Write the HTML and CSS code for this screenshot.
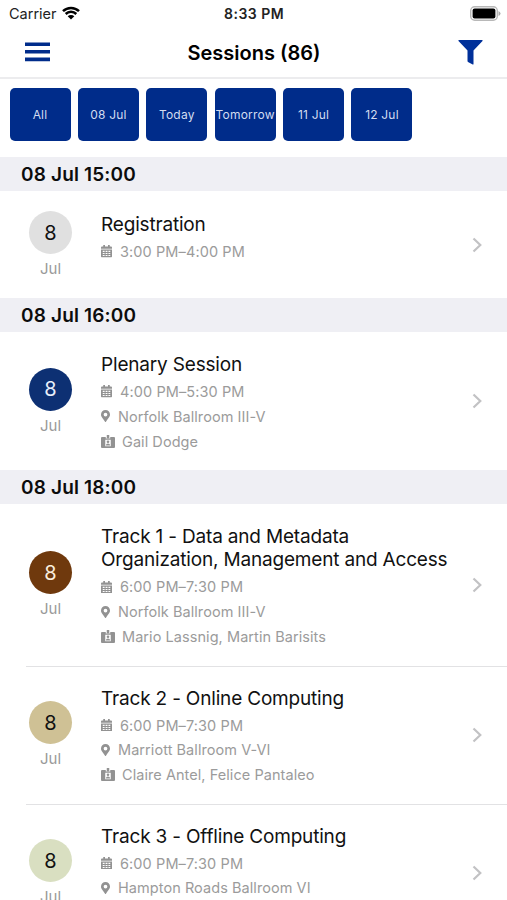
FILE: index.html
```html
<!DOCTYPE html>
<html lang="en">
<head>
<meta charset="utf-8">
<title>Sessions</title>
<link rel="stylesheet" href="styles.css">
</head>
<body>
<svg class="defs" aria-hidden="true">
  <symbol id="cal" viewBox="0 0 22 25"><path fill-rule="evenodd" d="M0 9h22v14a2 2 0 0 1-2 2H2a2 2 0 0 1-2-2zM3.500 11.500v2.300h3.700v-2.300zM9.200 11.500v2.300h3.700v-2.300zM14.900 11.500v2.300h3.700v-2.300zM3.500 15.800v2.300h3.700v-2.300zM9.200 15.800v2.300h3.700v-2.300zM14.900 15.800v2.300h3.700v-2.300zM3.500 20.100v2.100h3.700v-2.100zM9.200 20.100v2.100h3.700v-2.100zM14.900 20.100v2.100h3.700v-2.100z"/><path d="M2 3h2.500V0H8v3h6V0h3.500v3H20a2 2 0 0 1 2 2v2.500H0V5a2 2 0 0 1 2-2z"/></symbol>
  <symbol id="pin" viewBox="0 0 384 512"><path fill-rule="evenodd" d="M172.300 501.700C27 291 0 269.400 0 192 0 86 86 0 192 0s192 86 192 192c0 77.400-27 99-172.300 309.700a24 24 0 0 1-39.400 0zM192 272a80 80 0 1 0 0-160 80 80 0 0 0 0 160z"/></symbol>
  <symbol id="badge" viewBox="0 0 28 26"><path fill-rule="evenodd" d="M2 4h7.500v3h9V4H26a2 2 0 0 1 2 2v18a2 2 0 0 1-2 2H2a2 2 0 0 1-2-2V6a2 2 0 0 1 2-2zM8.500 9.500v13h11v-13z"/><path d="M11.500 0h5v7h-5z"/><circle cx="14" cy="13.500" r="2.600"/><path d="M9.800 21a4.200 4 0 0 1 8.400 0z"/></symbol>
  <symbol id="chev" viewBox="0 0 10 16"><path d="M1.500 1.500 8.300 8 1.500 14.500" fill="none" stroke="#c2c2c4" stroke-width="2.200"/></symbol>
</svg>
<div class="status">
  <span class="carrier">Carrier</span>
  <svg class="wifi" viewBox="0 0 18 14"><path d="M1 5.200a11.300 11.300 0 0 1 16 0M3.700 8a7.500 7.500 0 0 1 10.600 0" fill="none" stroke="#000" stroke-width="2.500"/><path d="M5.700 10.300a4.700 4.700 0 0 1 6.600 0L9 13.600z"/></svg>
  <span class="clock">8:33 PM</span>
  <svg class="battery" viewBox="0 0 31 15"><rect x=".7" y=".7" width="26.600" height="13.600" rx="4" fill="#fff" stroke="#b8b8b8" stroke-width="1.400"/><rect x="2.600" y="2.600" width="22.800" height="9.800" rx="2"/><path d="M28.500 5v5q2-1 2-2.500t-2-2.500z" fill="#aaa"/></svg>
</div>
<header class="nav">
  <svg class="menu" viewBox="0 0 25 20"><path d="M0 2.200h25M0 9.800h25M0 17.400h25" stroke="#002c8b" stroke-width="3.600"/></svg>
  <h1>Sessions (86)</h1>
  <svg class="filter" viewBox="0 0 25 25"><path d="M1 0h23q1 0 .5 1L15.500 10.500V24q0 .8-.8.500L10 22q-.5-.4-.5-1V10.500L.5 1Q0 0 1 0z" fill="#00309a"/></svg>
</header>
<nav class="chips">
  <span>All</span><span>08 Jul</span><span>Today</span><span>Tomorrow</span><span>11 Jul</span><span>12 Jul</span>
</nav>
<main>
  <h2>08 Jul 15:00</h2>
  <article class="row short">
    <div class="date"><b class="grey">8</b><i>Jul</i></div>
    <div class="info"><h3>Registration</h3>
      <p><svg class="cal"><use href="#cal"/></svg><span class="time">3:00 PM–4:00 PM</span></p></div>
    <svg class="chev"><use href="#chev"/></svg>
  </article>
  <h2>08 Jul 16:00</h2>
  <article class="row">
    <div class="date"><b class="navy">8</b><i>Jul</i></div>
    <div class="info"><h3>Plenary Session</h3>
      <p><svg class="cal"><use href="#cal"/></svg><span class="time">4:00 PM–5:30 PM</span></p>
      <p><svg class="pin"><use href="#pin"/></svg>Norfolk Ballroom III-V</p>
      <p><svg class="badge"><use href="#badge"/></svg>Gail Dodge</p></div>
    <svg class="chev"><use href="#chev"/></svg>
  </article>
  <h2>08 Jul 18:00</h2>
  <article class="row tall">
    <div class="date"><b class="brown">8</b><i>Jul</i></div>
    <div class="info"><h3>Track 1 - Data and Metadata<br>Organization, Management and Access</h3>
      <p><svg class="cal"><use href="#cal"/></svg><span class="time">6:00 PM–7:30 PM</span></p>
      <p><svg class="pin"><use href="#pin"/></svg>Norfolk Ballroom III-V</p>
      <p><svg class="badge"><use href="#badge"/></svg>Mario Lassnig, Martin Barisits</p></div>
    <svg class="chev"><use href="#chev"/></svg>
  </article>
  <hr>
  <article class="row">
    <div class="date"><b class="sand">8</b><i>Jul</i></div>
    <div class="info"><h3>Track 2 - Online Computing</h3>
      <p><svg class="cal"><use href="#cal"/></svg><span class="time">6:00 PM–7:30 PM</span></p>
      <p><svg class="pin"><use href="#pin"/></svg>Marriott Ballroom V-VI</p>
      <p><svg class="badge"><use href="#badge"/></svg>Claire Antel, Felice Pantaleo</p></div>
    <svg class="chev"><use href="#chev"/></svg>
  </article>
  <hr>
  <article class="row last">
    <div class="date"><b class="mint">8</b><i>Jul</i></div>
    <div class="info"><h3>Track 3 - Offline Computing</h3>
      <p><svg class="cal"><use href="#cal"/></svg><span class="time">6:00 PM–7:30 PM</span></p>
      <p><svg class="pin"><use href="#pin"/></svg>Hampton Roads Ballroom VI</p></div>
    <svg class="chev"><use href="#chev"/></svg>
  </article>
</main>
</body>
</html>
```
FILE: styles.css
```css
* { box-sizing: border-box; margin: 0; padding: 0; }
body { width: 507px; height: 900px; overflow: hidden; background: #fff; color: #111; font-family: Inter, "Liberation Sans", sans-serif; }
.defs { display: none; }
.status { height: 27px; display: flex; align-items: center; padding: 0 6px 0 9px; color: #222; }
.carrier { width: 53px; font-size: 14.500px; }
.wifi { width: 18px; height: 14px; margin-top: -2px; }
.clock { width: 61px; margin-left: 144px; font-size: 14px; font-weight: 600; letter-spacing: .5px; white-space: nowrap; }
.battery { width: 31px; height: 15px; margin-left: auto; }
.nav { height: 52px; display: flex; align-items: center; justify-content: space-between; padding: 0 24px 0 25px; border-bottom: 2px solid #ececee; }
.menu { width: 25px; height: 20px; }
.filter { width: 25px; height: 25px; }
h1 { font-size: 20px; font-weight: 600; line-height: 24px; color: #000; padding-top: 1px; }
.chips { height: 78px; display: flex; gap: 7.400px; padding: 9px 0 0 9.500px; }
.chips span { width: 61px; height: 53px; border-radius: 5px; background: #002c8a; color: #d3dcf0; font-size: 12px; letter-spacing: .2px; display: flex; align-items: center; justify-content: center; }
h2 { height: 34px; line-height: 36px; padding-left: 21px; background: #efeff4; font-size: 19px; font-weight: 600; letter-spacing: .16px; color: #0c0c0c; }
main { height: 743px; overflow: hidden; }
.row { height: 138px; display: flex; align-items: center; padding-right: 25px; }
.date { width: 101px; height: 67px; flex: none; display: flex; flex-direction: column; align-items: center; }
.date b { width: 43px; height: 43px; flex: none; border-radius: 50%; display: flex; align-items: center; justify-content: center; font-size: 20px; font-weight: 400; }
.date i { margin-top: 6px; font-style: normal; font-size: 15px; line-height: 18px; color: #999; }
.grey { background: #e0e0e0; }
.navy { background: #0d3073; color: #e8effa; }
.brown { background: #6f390d; color: #faeede; }
.sand { background: #cfc195; }
.mint { background: #d9dfc1; }
.info { align-self: flex-start; padding-top: 21px; flex: 1; white-space: nowrap; }
.short { height: 107px; }
.short .info { padding-top: 22px; }
.tall { height: 161.500px; }
h3 { font-size: 19px; font-weight: 400; line-height: 23.300px; letter-spacing: -.18px; margin-bottom: 3px; }
p { height: 24.700px; display: flex; align-items: center; color: #9b9b9b; font-size: 14.500px; letter-spacing: .06px; }
.time { letter-spacing: .1px; }
p svg { fill: #929292; flex: none; }
.cal { width: 11px; height: 12.500px; margin-right: 8px; }
.pin { width: 9px; height: 12px; margin-right: 8px; }
.badge { width: 14px; height: 13px; margin-right: 7px; }
.chev { width: 10px; height: 16px; flex: none; }
hr { border: 0; height: 1px; margin: 0 0 -1px 26px; background: #e2e2e4; }
```
